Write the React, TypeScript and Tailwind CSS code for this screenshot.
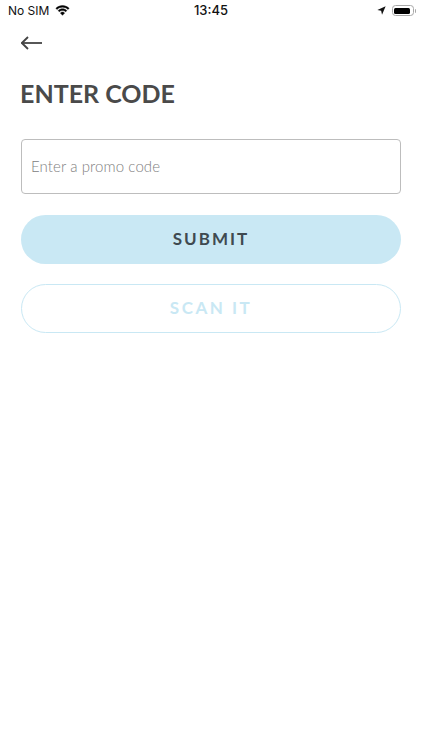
import React from 'react';

const WifiIcon = () => (
  <svg width="15" height="11" viewBox="0 0 17 12" fill="#000" stroke="#000" strokeWidth="0.5" preserveAspectRatio="none">
    <path d="M8.5 2.4c2.4 0 4.6.9 6.3 2.5l1.2-1.3C14 1.7 11.3.6 8.5.6S3 1.7 1 3.6l1.2 1.3C3.9 3.3 6.1 2.4 8.5 2.4z" />
    <path d="M8.5 5.9c1.4 0 2.7.5 3.7 1.5l1.2-1.3C12.1 4.8 10.3 4.1 8.5 4.1s-3.6.7-4.9 2l1.2 1.3c1-1 2.3-1.5 3.7-1.5z" />
    <path d="M8.5 7.7c-.9 0-1.8.4-2.4 1l2.4 2.6 2.4-2.6c-.6-.6-1.5-1-2.4-1z" />
  </svg>
);

const LocationIcon = () => (
  <svg width="9" height="9" viewBox="0 0 10 10" fill="#111">
    <path d="M9.6.4 5.6 9.6 4.6 5.4.4 4.4z" />
  </svg>
);

const BatteryIcon = () => (
  <div className="flex items-center">
    <div className="w-[22px] h-[11px] rounded-[3.5px] border border-[#a8a8a8] p-[1.5px]">
      <div className="w-[16px] h-full rounded-[1.5px] bg-black" />
    </div>
    <div className="w-[1.5px] h-[4px] ml-[1px] rounded-r-sm bg-[#a8a8a8]" />
  </div>
);

const App = () => {
  return (
    <div className="w-[422px] h-[750px] bg-white overflow-hidden font-['Lato','Noto_Sans',sans-serif]">
      {/* Status bar */}
      <div className="h-[21px] pl-[8px] pr-[6px] flex items-center justify-between leading-none text-[#111] font-['Inter','Liberation_Sans',sans-serif]">
        <div className="w-[118px] flex items-center gap-[6px] text-[12px]">
          <span>No SIM</span>
          <WifiIcon />
        </div>
        <span className="text-[13px] font-medium">13:45</span>
        <div className="w-[120px] flex items-center justify-end gap-[6px]">
          <LocationIcon />
          <BatteryIcon />
        </div>
      </div>

      <div className="px-[21px]">
        {/* Back arrow */}
        <div className="h-[22px] mt-[11px]">
          <svg width="22" height="22" viewBox="0 0 22 22" fill="none" stroke="#444" strokeWidth="1.8">
            <path d="M0.5 11H21" />
            <path d="M7 5 0.9 11 7 17" />
          </svg>
        </div>

        <h1 className="mt-[23px] -ml-[1px] text-[25px] leading-[32px] font-bold text-[#4a4a4a]">ENTER CODE</h1>

        <div className="mt-[30px] h-[55px] rounded-[4px] border border-[#bdbdbd] px-[9px] flex items-center text-[15px] font-light tracking-[0.1px] text-[#808080]">
          Enter a promo code
        </div>

        <button className="mt-[21px] w-full h-[49px] rounded-full bg-[#c9e8f4] flex items-center justify-center pb-[1px] text-[17px] font-bold tracking-[2px] text-[#3f4a50]">
          SUBMIT
        </button>

        <button className="mt-[20px] w-full h-[49px] rounded-full border border-[#c9e8f4] flex items-center justify-center pb-[1px] text-[17px] font-bold tracking-[2.5px] text-[#c9e8f4]">
          SCAN IT
        </button>
      </div>
    </div>
  );
};

export default App;
